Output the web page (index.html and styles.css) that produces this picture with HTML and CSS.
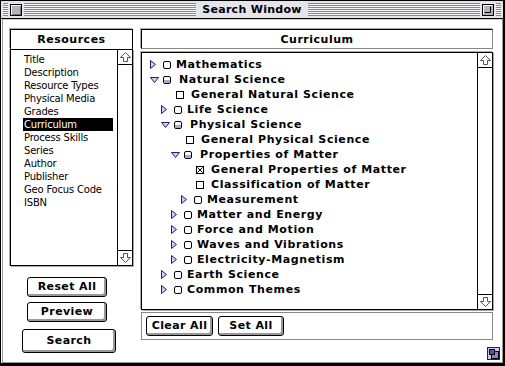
FILE: index.html
```html
<!DOCTYPE html>
<html lang="en">
<head>
    <meta charset="UTF-8">
    <title>Search Window</title>
    <link rel="stylesheet" href="styles.css">
</head>
<body>
    <div class="window">
        <div class="titlebar">
            <span class="stripes edge"></span>
            <span class="closebox"></span>
            <span class="stripes"></span>
            <span class="title">Search Window</span>
            <span class="stripes"></span>
            <span class="zoombox">
                <svg width="12" height="12" viewBox="0 0 12 12">
                    <rect x="0.5" y="0.5" width="11" height="11" fill="#b4b4b4" stroke="#000"/>
                    <path d="M1.5 10.5V1.5H10.5" fill="none" stroke="#fff"/>
                    <path d="M2.5 8.5H8.5V2.5" fill="none" stroke="#000"/>
                </svg>
            </span>
            <span class="stripes edge"></span>
        </div>

        <div class="content">
            <div class="left">
                <div class="pane-head dark">Resources</div>
                <div class="listbox">
                    <ul class="items">
                        <li>Title</li>
                        <li>Description</li>
                        <li>Resource Types</li>
                        <li>Physical Media</li>
                        <li>Grades</li>
                        <li class="selected">Curriculum</li>
                        <li>Process Skills</li>
                        <li>Series</li>
                        <li>Author</li>
                        <li>Publisher</li>
                        <li>Geo Focus Code</li>
                        <li>ISBN</li>
                    </ul>
                    <div class="scroll">
                        <div class="arrow up">
                            <svg width="11" height="10" viewBox="0 0 11 10"><path d="M5.5 0.5L10.5 5.5H7.5V9.5H3.5V5.5H0.5Z" fill="#fff" stroke="#555"/></svg>
                        </div>
                        <div class="track"></div>
                        <div class="arrow down">
                            <svg width="11" height="10" viewBox="0 0 11 10"><path d="M5.5 9.5L10.5 4.5H7.5V0.5H3.5V4.5H0.5Z" fill="#fff" stroke="#555"/></svg>
                        </div>
                    </div>
                </div>
                <button class="btn reset">Reset All</button>
                <button class="btn preview">Preview</button>
                <button class="btn search">Search</button>
            </div>

            <div class="right">
                <div class="pane-head">Curriculum</div>
                <div class="treebox">
                    <ul class="tree">
                        <li class="l0 closed"><span class="tw"><svg width="6" height="9"><path d="M0.5 0.5L5.5 4.5L0.5 8.5Z" fill="#ccf" stroke="#226"/></svg></span><span class="cb"><svg width="8" height="8"><rect x="0.5" y="0.5" width="7" height="7" rx="1.5" fill="#fff" stroke="#000"/></svg></span>Mathematics</li>
                        <li class="l0 open"><span class="tw"><svg width="9" height="6"><path d="M0.5 0.5H8.5L4.5 5.5Z" fill="#ccf" stroke="#226"/></svg></span><span class="cb"><svg width="8" height="8"><rect x="0.5" y="0.5" width="7" height="7" rx="1.5" fill="#fff" stroke="#000"/><rect x="1" y="4" width="6" height="3" fill="#a8a8c8"/></svg></span>Natural Science</li>
                        <li class="l1 leaf"><span class="tw"></span><span class="cb"><svg width="8" height="8"><rect x="0.5" y="0.5" width="7" height="7" fill="#fff" stroke="#000"/></svg></span>General Natural Science</li>
                        <li class="l1 closed"><span class="tw"><svg width="6" height="9"><path d="M0.5 0.5L5.5 4.5L0.5 8.5Z" fill="#ccf" stroke="#226"/></svg></span><span class="cb"><svg width="8" height="8"><rect x="0.5" y="0.5" width="7" height="7" rx="1.5" fill="#fff" stroke="#000"/></svg></span>Life Science</li>
                        <li class="l1 open"><span class="tw"><svg width="9" height="6"><path d="M0.5 0.5H8.5L4.5 5.5Z" fill="#ccf" stroke="#226"/></svg></span><span class="cb"><svg width="8" height="8"><rect x="0.5" y="0.5" width="7" height="7" rx="1.5" fill="#fff" stroke="#000"/><rect x="1" y="4" width="6" height="3" fill="#a8a8c8"/></svg></span>Physical Science</li>
                        <li class="l2 leaf"><span class="tw"></span><span class="cb"><svg width="8" height="8"><rect x="0.5" y="0.5" width="7" height="7" fill="#fff" stroke="#000"/></svg></span>General Physical Science</li>
                        <li class="l2 open"><span class="tw"><svg width="9" height="6"><path d="M0.5 0.5H8.5L4.5 5.5Z" fill="#ccf" stroke="#226"/></svg></span><span class="cb"><svg width="8" height="8"><rect x="0.5" y="0.5" width="7" height="7" rx="1.5" fill="#fff" stroke="#000"/><rect x="1" y="4" width="6" height="3" fill="#a8a8c8"/></svg></span>Properties of Matter</li>
                        <li class="l3 leaf"><span class="tw"></span><span class="cb"><svg width="8" height="8"><rect x="0.5" y="0.5" width="7" height="7" fill="#fff" stroke="#000"/><path d="M1.5 1.5L6.5 6.5M6.5 1.5L1.5 6.5" stroke="#000"/></svg></span>General Properties of Matter</li>
                        <li class="l3 leaf"><span class="tw"></span><span class="cb"><svg width="8" height="8"><rect x="0.5" y="0.5" width="7" height="7" fill="#fff" stroke="#000"/></svg></span>Classification of Matter</li>
                        <li class="l3 closed"><span class="tw"><svg width="6" height="9"><path d="M0.5 0.5L5.5 4.5L0.5 8.5Z" fill="#ccf" stroke="#226"/></svg></span><span class="cb"><svg width="8" height="8"><rect x="0.5" y="0.5" width="7" height="7" rx="1.5" fill="#fff" stroke="#000"/></svg></span>Measurement</li>
                        <li class="l2 closed"><span class="tw"><svg width="6" height="9"><path d="M0.5 0.5L5.5 4.5L0.5 8.5Z" fill="#ccf" stroke="#226"/></svg></span><span class="cb"><svg width="8" height="8"><rect x="0.5" y="0.5" width="7" height="7" rx="1.5" fill="#fff" stroke="#000"/></svg></span>Matter and Energy</li>
                        <li class="l2 closed"><span class="tw"><svg width="6" height="9"><path d="M0.5 0.5L5.5 4.5L0.5 8.5Z" fill="#ccf" stroke="#226"/></svg></span><span class="cb"><svg width="8" height="8"><rect x="0.5" y="0.5" width="7" height="7" rx="1.5" fill="#fff" stroke="#000"/></svg></span>Force and Motion</li>
                        <li class="l2 closed"><span class="tw"><svg width="6" height="9"><path d="M0.5 0.5L5.5 4.5L0.5 8.5Z" fill="#ccf" stroke="#226"/></svg></span><span class="cb"><svg width="8" height="8"><rect x="0.5" y="0.5" width="7" height="7" rx="1.5" fill="#fff" stroke="#000"/></svg></span>Waves and Vibrations</li>
                        <li class="l2 closed"><span class="tw"><svg width="6" height="9"><path d="M0.5 0.5L5.5 4.5L0.5 8.5Z" fill="#ccf" stroke="#226"/></svg></span><span class="cb"><svg width="8" height="8"><rect x="0.5" y="0.5" width="7" height="7" rx="1.5" fill="#fff" stroke="#000"/></svg></span>Electricity-Magnetism</li>
                        <li class="l1 closed"><span class="tw"><svg width="6" height="9"><path d="M0.5 0.5L5.5 4.5L0.5 8.5Z" fill="#ccf" stroke="#226"/></svg></span><span class="cb"><svg width="8" height="8"><rect x="0.5" y="0.5" width="7" height="7" rx="1.5" fill="#fff" stroke="#000"/></svg></span>Earth Science</li>
                        <li class="l1 closed"><span class="tw"><svg width="6" height="9"><path d="M0.5 0.5L5.5 4.5L0.5 8.5Z" fill="#ccf" stroke="#226"/></svg></span><span class="cb"><svg width="8" height="8"><rect x="0.5" y="0.5" width="7" height="7" rx="1.5" fill="#fff" stroke="#000"/></svg></span>Common Themes</li>
                    </ul>
                    <div class="scroll">
                        <div class="arrow up">
                            <svg width="11" height="10" viewBox="0 0 11 10"><path d="M5.5 0.5L10.5 5.5H7.5V9.5H3.5V5.5H0.5Z" fill="#fff" stroke="#555"/></svg>
                        </div>
                        <div class="track"></div>
                        <div class="arrow down">
                            <svg width="11" height="10" viewBox="0 0 11 10"><path d="M5.5 9.5L10.5 4.5H7.5V0.5H3.5V4.5H0.5Z" fill="#fff" stroke="#555"/></svg>
                        </div>
                    </div>
                </div>
                <div class="strip">
                    <button class="btn clear">Clear All</button>
                    <button class="btn setall">Set All</button>
                </div>
            </div>
        </div>

        <div class="growbox">
            <svg width="13" height="13" viewBox="0 0 13 13">
                <rect x="0.5" y="0.5" width="12" height="12" fill="#c8c8e8" stroke="#224"/>
                <rect x="4.5" y="4.5" width="7" height="7" fill="#8888c0" stroke="#000"/>
                <rect x="2.5" y="2.5" width="5" height="5" fill="#5555a0" stroke="#000"/>
            </svg>
        </div>
    </div>
</body>
</html>
```

FILE: styles.css
```css
* {
    box-sizing: border-box;
}
body {
    margin: 0;
    background: #fff;
    font-family: "DejaVu Sans", sans-serif;
}
.window {
    position: relative;
    width: 505px;
    height: 366px;
    border: 1px solid #000;
    border-right-width: 2px;
    border-bottom-width: 3px;
    background: #fff;
    display: flex;
    flex-direction: column;
}

/* title bar */
.titlebar {
    flex: none;
    height: 18px;
    display: flex;
    align-items: center;
    padding: 0 2px;
    background: #e4e4ec;
    border-bottom: 1px solid #000;
}
.stripes {
    flex: 1;
    height: 13px;
    background: repeating-linear-gradient(to bottom, #888 0 1px, #f4f4f4 1px 2px);
}
.stripes.edge {
    flex: none;
    width: 5px;
}
.closebox {
    width: 12px;
    height: 12px;
    margin: 0 2px;
    border: 1px solid #000;
    background: #b4b4b4;
    box-shadow: inset 1px 1px 0 #fff, inset -1px -1px 0 #777;
}
.zoombox {
    display: flex;
    margin: 0 2px;
}
.title {
    padding: 0 6px;
    font-weight: bold;
    font-size: 11px;
    letter-spacing: 0.3px;
    color: #000;
}

/* window content */
.content {
    flex: 1;
    display: flex;
    gap: 8px;
    margin-left: 1px;
    padding: 9px 0 0 7px;
    border: 1px solid #999;
    border-top-color: #c8c8d8;
}
.left {
    width: 123px;
    display: flex;
    flex-direction: column;
    align-items: flex-start;
}
.right {
    width: 352px;
    display: flex;
    flex-direction: column;
}
.pane-head {
    width: 100%;
    height: 20px;
    display: flex;
    align-items: center;
    justify-content: center;
    font-weight: bold;
    font-size: 11px;
    letter-spacing: 0.5px;
    border: 1px solid #000;
    border-right-color: #888;
    border-bottom-color: #888;
    box-shadow: -1px -1px 0 #aaa;
}
.pane-head.dark {
    border-color: #000;
    border-bottom: none;
}

/* resources list */
.listbox {
    width: 100%;
    height: 217px;
    display: flex;
    border: 1px solid #000;
    box-shadow: -1px 0 0 #aaa, 1px 1px 0 #aaa;
}
.items {
    flex: 1;
    list-style: none;
    margin: 0;
    padding: 3px 4px 0 12px;
    font-size: 10px;
    letter-spacing: -0.2px;
}
.items li {
    height: 13px;
    line-height: 13px;
    padding-left: 1px;
}
.items li.selected {
    background: #000;
    color: #fff;
}
.scroll {
    width: 15px;
    display: flex;
    flex-direction: column;
    border-left: 1px solid #000;
}
.arrow {
    height: 15px;
    display: flex;
    align-items: center;
    justify-content: center;
}
.arrow.up {
    border-bottom: 1px solid #000;
}
.arrow.down {
    border-top: 1px solid #000;
}
.track {
    flex: 1;
}

/* buttons */
.btn {
    display: block;
    height: 20px;
    padding: 0 0 1px;
    font-family: "DejaVu Sans", sans-serif;
    font-weight: bold;
    font-size: 11px;
    letter-spacing: 0.4px;
    color: #000;
    background: #fff;
    border: 1px solid #000;
    border-radius: 3px;
    box-shadow: inset -2px -2px 0 #999;
}
.reset {
    width: 80px;
    margin: 11px 0 0 17px;
}
.preview {
    width: 80px;
    margin: 5px 0 0 17px;
}
.search {
    width: 94px;
    height: 24px;
    margin: 7px 0 0 12px;
}

/* curriculum tree */
.treebox {
    height: 258px;
    margin-top: 3px;
    display: flex;
    border: 1px solid #000;
    box-shadow: -1px -1px 0 #aaa, 1px 1px 0 #aaa;
}
.tree {
    flex: 1;
    list-style: none;
    margin: 0;
    padding: 4px 0 0;
    font-weight: bold;
    font-size: 11px;
    letter-spacing: 0.6px;
}
.tree li {
    height: 15px;
    display: flex;
    align-items: center;
    white-space: nowrap;
}
.tree .l0 { padding-left: 8px; }
.tree .l1 { padding-left: 19px; }
.tree .l2 { padding-left: 29px; }
.tree .l3 { padding-left: 39px; }
.tw {
    width: 13px;
    display: flex;
    align-items: center;
}
.cb {
    display: flex;
    margin-right: 5px;
}
.open .cb {
    margin-right: 8px;
}
.leaf .tw {
    width: 15px;
}
.leaf .cb {
    margin-right: 7px;
}

.strip {
    height: 28px;
    margin-top: 2px;
    display: flex;
    gap: 5px;
    padding: 3px 4px;
    border: 1px solid #888;
}
.clear {
    width: 67px;
}
.setall {
    width: 66px;
}

.growbox {
    position: absolute;
    left: 486px;
    top: 346px;
    display: flex;
}
```
